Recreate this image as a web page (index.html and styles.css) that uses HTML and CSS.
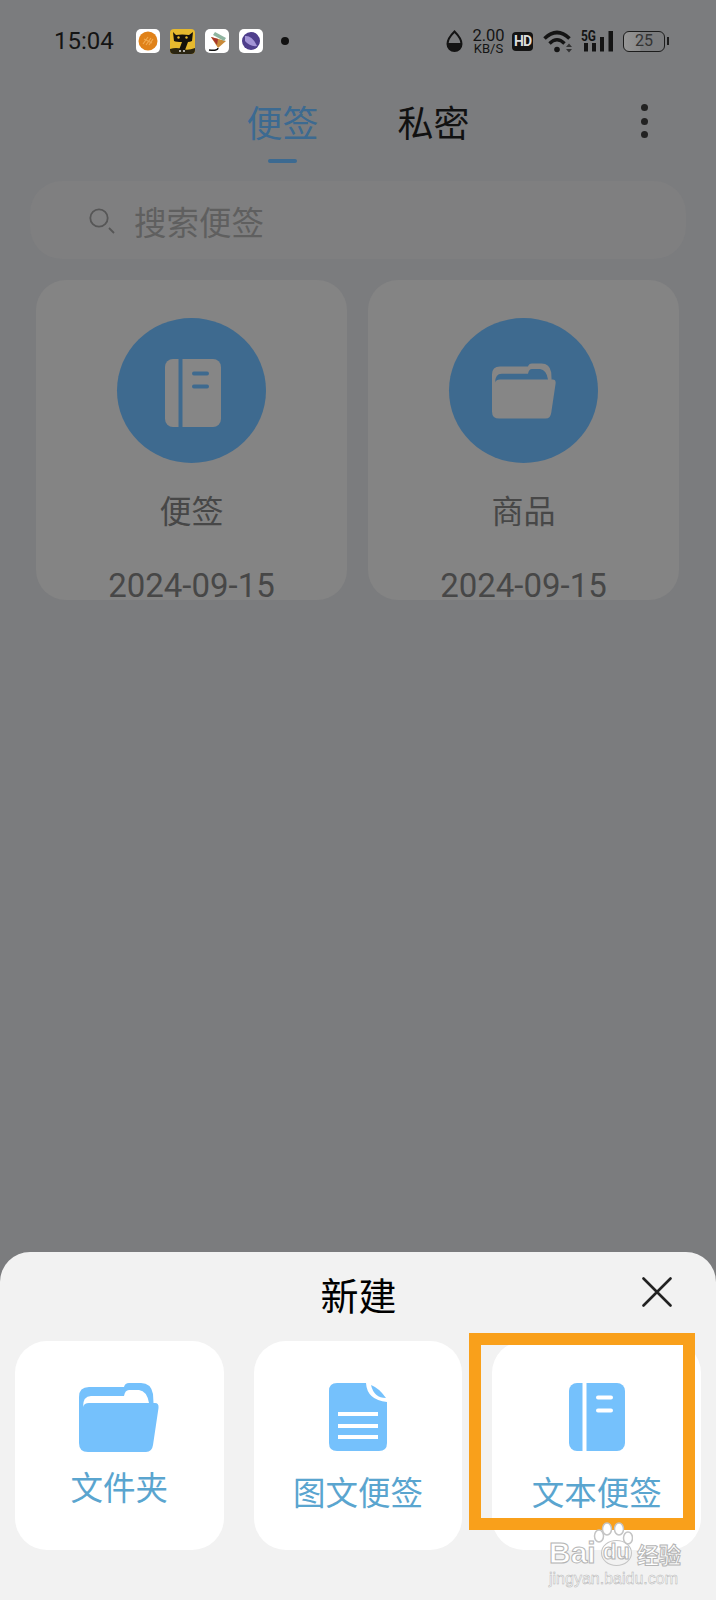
FILE: index.html
```html
<!DOCTYPE html>
<html lang="zh-CN">
<head>
  <meta charset="UTF-8" />
  <meta name="viewport" content="width=device-width, initial-scale=1" />
  <title>便签</title>
  <link rel="stylesheet" href="styles.css">
</head>
<body>
  <svg class="defs" width="0" height="0">
    <symbol id="folder" viewBox="0 0 80 69">
      <path class="ink" d="M10 4H45Q46 0 50 0H62Q72 0 74 11L74.5 20H76Q80 20 79.5 25L74 62Q73 69 67 69H9Q0 69 0 60V14Q0 4 10 4Z"/>
      <path class="cut" d="M4 24Q4 13 12 13H45Q46 7 50 7H60Q68 8 70 20H10Q5 20 4 24Z"/>
    </symbol>
    <symbol id="book" viewBox="0 0 56 68">
      <rect class="ink" width="56" height="68" rx="8"/>
      <rect class="cut" x="13.5" width="4" height="68"/>
      <rect class="cut" x="27" y="12.500" width="17" height="4" rx="2"/>
      <rect class="cut" x="27" y="25.500" width="17" height="4" rx="2"/>
    </symbol>
    <symbol id="doc" viewBox="0 0 58 68">
      <path class="ink" d="M8 0H37Q38 17 58 19V60Q58 68 50 68H8Q0 68 0 60V8Q0 0 8 0Z"/>
      <path class="ink" d="M42 2Q50 5 57 15Q45 15 42 2Z"/>
      <rect class="cut" x="9" y="29" width="40" height="4"/>
      <rect class="cut" x="9" y="41" width="40" height="4"/>
      <rect class="cut" x="9" y="52" width="40" height="4"/>
    </symbol>
  </svg>

  <div class="status-bar">
    <span class="time">15:04</span>
    <div class="app-icons">
      <svg width="24" height="24" viewBox="0 0 24 24">
        <rect width="24" height="24" rx="5" fill="#fff"/>
        <circle cx="12" cy="12" r="9.500" fill="#e0821a"/>
        <path d="M7 15l5-7M10 16l5-7M13 16l4-6M8 10l8 4" stroke="#f2aa50" stroke-width="1.200"/>
      </svg>
      <svg width="25" height="25" viewBox="0 0 25 25">
        <rect width="25" height="25" rx="4" fill="#e6b92e"/>
        <path d="M0 20Q6 18 12 20T25 19V21Q25 25 21 25H4Q0 25 0 21Z" fill="#2a2410"/>
        <path d="M3 3L6 6Q12 5 19 6L23 3L22 12Q20 13 18 13L15 21H9L12 13Q6 13 4 12Z" fill="#14110c"/>
        <circle cx="8.500" cy="8.500" r="1.200" fill="#e6b92e"/>
        <circle cx="16.500" cy="8.500" r="1.200" fill="#e6b92e"/>
        <path d="M9 22h2M13 22h2" stroke="#ddd" stroke-width="1.500"/>
      </svg>
      <svg width="24" height="24" viewBox="0 0 24 24">
        <rect width="24" height="24" rx="5" fill="#fff"/>
        <path d="M6 8L21 12L13 19Z" fill="#c88a3a"/>
        <path d="M6 8L13 10L12 16Z" fill="#a8352c"/>
        <path d="M10 3L21 9L19 12L8 6Z" fill="#8fb4a0"/>
        <path d="M13 19Q13 22 4 21" fill="none" stroke="#111" stroke-width="1.500"/>
      </svg>
      <svg width="24" height="24" viewBox="0 0 24 24">
        <rect width="24" height="24" rx="5" fill="#fff"/>
        <circle cx="12" cy="12" r="9" fill="#4f3f8c"/>
        <path d="M6 7Q13 6 18 17Q11 18 6 12Z" fill="#a394d6"/>
      </svg>
    </div>
    <span class="notice-dot"></span>
    <div class="status-right">
      <svg class="drop" width="17" height="22" viewBox="0 0 17 22">
        <path d="M8.500 1.500Q15.500 8.500 15.500 14A7 7 0 0 1 1.500 14Q1.500 8.500 8.500 1.500Z" fill="none" stroke="#141414" stroke-width="2"/>
        <path d="M1.500 13H15.500V14A7 7 0 0 1 1.500 14Z" fill="#141414"/>
      </svg>
      <div class="speed"><span class="speed-num">2.00</span><span class="speed-unit">KB/S</span></div>
      <span class="hd">HD</span>
      <svg class="wifi" width="31" height="23" viewBox="0 0 31 23">
        <path d="M1.500 8.500Q14 -3.500 26.500 8.500" fill="none" stroke="#141414" stroke-width="3.600"/>
        <path d="M6.500 13.500Q14 6 21.500 13.500" fill="none" stroke="#141414" stroke-width="3.400"/>
        <circle cx="14" cy="19.500" r="2.800" fill="#141414"/>
        <path d="M23 17L26 13.500L29 17ZM23 19L26 22.500L29 19Z" fill="#333"/>
      </svg>
      <svg class="signal" width="32" height="22" viewBox="0 0 32 22">
        <text x="0" y="11" font-family="Roboto" font-weight="700" font-size="15" textLength="15" lengthAdjust="spacingAndGlyphs" fill="#141414">5G</text>
        <rect x="3" y="13" width="4" height="8.500" fill="#141414"/>
        <rect x="11" y="13" width="4" height="8.500" fill="#141414"/>
        <rect x="19" y="7" width="4" height="14.500" fill="#141414"/>
        <rect x="27.500" y="1" width="4.500" height="20.500" fill="#141414"/>
      </svg>
      <div class="battery"><span>25</span></div>
    </div>
  </div>

  <div class="tabs">
    <div class="tab-list">
      <div class="tab active">便签<span class="tab-line"></span></div>
      <div class="tab">私密<span class="tab-line hidden"></span></div>
    </div>
    <div class="more"><i></i><i></i><i></i></div>
  </div>

  <div class="search">
    <svg width="26" height="27" viewBox="0 0 26 27">
      <circle cx="10" cy="11" r="8.700" fill="none" stroke="#565656" stroke-width="1.800"/>
      <path d="M20 21L25 26" stroke="#565656" stroke-width="1.800"/>
    </svg>
    <span>搜索便签</span>
  </div>

  <div class="note-grid">
    <div class="note-card">
      <div class="note-circle"><svg class="book-icon"><use href="#book"/></svg></div>
      <div class="note-name">便签</div>
      <div class="note-date">2024-09-15</div>
    </div>
    <div class="note-card">
      <div class="note-circle"><svg class="folder-icon"><use href="#folder"/></svg></div>
      <div class="note-name">商品</div>
      <div class="note-date">2024-09-15</div>
    </div>
  </div>

  <div class="sheet">
    <div class="sheet-head">
      <span></span>
      <div class="sheet-title">新建</div>
      <svg class="close" width="30" height="30" viewBox="0 0 30 30">
        <path d="M1.500 1.500L28.500 28.500M28.500 1.500L1.500 28.500" stroke="#222" stroke-width="2.600" stroke-linecap="round"/>
      </svg>
    </div>
    <div class="new-grid">
      <div class="new-card first">
        <svg class="new-folder"><use href="#folder"/></svg>
        <div class="new-label">文件夹</div>
      </div>
      <div class="new-card">
        <svg class="new-doc"><use href="#doc"/></svg>
        <div class="new-label">图文便签</div>
      </div>
      <div class="new-card">
        <svg class="new-book"><use href="#book"/></svg>
        <div class="new-label">文本便签</div>
      </div>
    </div>
    <div class="highlight"></div>
    <div class="watermark">
      <div class="wm-logo"><span class="wm-bai">Bai</span><span class="wm-du">du</span><span class="wm-jy">经验</span></div>
      <svg class="paw" width="40" height="26" viewBox="0 0 40 26">
        <g fill="#fff" stroke="#c4c4c4" stroke-width="1.500">
          <ellipse cx="6" cy="14" rx="4.500" ry="6"/>
          <ellipse cx="14" cy="7" rx="4.500" ry="6"/>
          <ellipse cx="26" cy="7" rx="4.500" ry="6"/>
          <ellipse cx="35" cy="16" rx="4.500" ry="6"/>
        </g>
      </svg>
      <div class="wm-url">jingyan.baidu.com</div>
    </div>
  </div>
</body>
</html>
```

FILE: styles.css
```css
* {
  box-sizing: border-box;
}

body {
  font-family: "Roboto", "Noto Sans CJK SC", sans-serif;
  margin: 0;
  width: 716px;
  height: 1600px;
  overflow: hidden;
  display: flex;
  flex-direction: column;
  background-color: #7b7c7e;
  color: #111;
}

.defs {
  position: absolute;
}

.ink {
  fill: var(--ink);
}

.cut {
  fill: var(--cut);
}

/* status bar */
.status-bar {
  height: 82px;
  padding: 0 51px 0 54px;
  display: flex;
  align-items: center;
  color: #141414;
}

.time {
  font-size: 24px;
  width: 58px;
  white-space: nowrap;
}

.app-icons {
  margin-left: 24px;
  display: flex;
  align-items: center;
  gap: 10px;
}

.notice-dot {
  width: 8px;
  height: 8px;
  border-radius: 50%;
  background-color: #111;
  margin-left: 18px;
}

.status-right {
  margin-left: auto;
  display: flex;
  align-items: center;
}

.speed {
  margin-left: 9px;
  width: 33px;
  display: flex;
  flex-direction: column;
  align-items: center;
}

.speed-num {
  font-size: 16.500px;
  line-height: 14px;
}

.speed-unit {
  font-size: 13px;
  line-height: 10px;
  margin-top: 1px;
}

.hd {
  margin-left: 7px;
  width: 21px;
  height: 19px;
  border-radius: 4px;
  background-color: #141414;
  color: #ddd;
  font-size: 14px;
  font-weight: 700;
  line-height: 19px;
  text-align: center;
  letter-spacing: -1px;
}

.wifi {
  margin-left: 10px;
}

.signal {
  margin-left: 7px;
  overflow: visible;
}

.battery {
  position: relative;
  margin-left: 10px;
  width: 42px;
  height: 21px;
  border: 1.500px solid #1c1c1c;
  border-radius: 6px;
  background: linear-gradient(to right, #969696, #8a8a8a 40%, #7b7c7e 42%);
  font-size: 16px;
  line-height: 18px;
  text-align: center;
  color: #333;
}

.battery::after {
  content: "";
  position: absolute;
  right: -5px;
  top: 5px;
  width: 2px;
  height: 8px;
  background-color: #1c1c1c;
}

/* tabs */
.tabs {
  padding-top: 21px;
  position: relative;
}

.tab-list {
  display: flex;
  justify-content: center;
  gap: 79px;
}

.tab {
  font-family: "Noto Sans CJK SC", sans-serif;
  font-size: 36px;
  line-height: 36px;
  display: flex;
  flex-direction: column;
  align-items: center;
}

.tab.active {
  color: #3c6a91;
}

.tab-line {
  margin-top: 20px;
  width: 29px;
  height: 4px;
  border-radius: 2px;
  background-color: #3c6a91;
}

.tab-line.hidden {
  visibility: hidden;
}

.more {
  position: absolute;
  right: 68px;
  top: 22px;
  display: flex;
  flex-direction: column;
  gap: 6.500px;
}

.more i {
  display: block;
  width: 7px;
  height: 7px;
  border-radius: 50%;
  background-color: #222;
}

/* search */
.search {
  margin: 18px 30px 0;
  height: 78px;
  border-radius: 32px;
  background-color: #7f7f80;
  padding-left: 59px;
  display: flex;
  align-items: center;
  gap: 19px;
  font-family: "Noto Sans CJK SC", sans-serif;
  font-size: 32.500px;
  color: #5f5f5f;
}

/* note cards */
.note-grid {
  margin-top: 21px;
  padding-left: 36px;
  display: flex;
  gap: 21px;
}

.note-card {
  width: 311px;
  height: 320px;
  border-radius: 30px;
  background-color: #848484;
  padding-top: 38px;
  display: flex;
  flex-direction: column;
  align-items: center;
  --ink: #868686;
  --cut: #3e6a8f;
}

.note-circle {
  flex-shrink: 0;
  width: 149px;
  height: 145px;
  border-radius: 50%;
  background-color: #3e6a8f;
  display: flex;
  align-items: center;
  justify-content: center;
}

.book-icon {
  width: 56px;
  height: 68px;
  margin: 4px 0 0 3px;
}

.folder-icon {
  width: 64px;
  height: 56px;
  margin: 1px 0 0 1px;
}

.note-name {
  margin-top: 30px;
  font-family: "Noto Sans CJK SC", sans-serif;
  font-size: 32px;
  line-height: 33px;
  color: #474747;
}

.note-date {
  margin-top: 43px;
  font-size: 33px;
  line-height: 33px;
  color: #474747;
  white-space: nowrap;
}

/* bottom sheet */
.sheet {
  position: relative;
  margin-top: auto;
  height: 348px;
  border-radius: 30px 30px 0 0;
  background-color: #f2f2f2;
  padding-top: 22px;
}

.sheet-head {
  padding: 0 44px 0 45px;
  height: 39px;
  display: grid;
  grid-template-columns: 1fr auto 1fr;
  align-items: center;
}

.sheet-title {
  font-family: "Noto Sans CJK SC", sans-serif;
  font-size: 38px;
  line-height: 39px;
  color: #000;
}

.close {
  justify-self: end;
  margin-top: -3px;
}

.new-grid {
  margin-top: 28px;
  padding: 0 15px;
  display: grid;
  grid-template-columns: repeat(3, 1fr);
  gap: 30px;
}

.new-card {
  height: 209px;
  border-radius: 32px;
  background-color: #fff;
  padding-top: 42px;
  display: flex;
  flex-direction: column;
  align-items: center;
  --ink: #75c1fc;
  --cut: #fff;
}

.new-folder {
  width: 80px;
  height: 69px;
}

.new-doc {
  width: 58px;
  height: 68px;
}

.new-book {
  width: 56px;
  height: 68px;
}

.new-label {
  margin-top: 24px;
  font-family: "Noto Sans CJK SC", sans-serif;
  font-size: 32.500px;
  line-height: 32px;
  color: #5aa5cf;
  white-space: nowrap;
}

.first .new-label {
  margin-top: 18px;
}

/* tutorial marker + watermark, both sit on top of the sheet */
.highlight {
  position: absolute;
  left: 469px;
  top: 81px;
  width: 226px;
  height: 197px;
  border: 12.500px solid #f9a01b;
}

.watermark {
  position: absolute;
  left: 549px;
  top: 270px;
  width: 132px;
  padding-top: 18px;
  color: #fff;
  white-space: nowrap;
}

.paw {
  position: absolute;
  left: 44px;
  top: 0;
}

.wm-logo {
  display: flex;
  align-items: center;
  height: 26px;
  font-family: "Liberation Sans", sans-serif;
  font-weight: 700;
  -webkit-text-stroke: 1px #b4b4b4;
}

.wm-bai {
  font-size: 30px;
  line-height: 26px;
}

.wm-du {
  margin-left: 5px;
  width: 36px;
  height: 26px;
  border-radius: 50%;
  border: 1.500px solid #c4c4c4;
  font-size: 22px;
  line-height: 22px;
  text-align: center;
}

.wm-jy {
  margin-left: 5px;
  font-family: "Noto Sans CJK SC", sans-serif;
  font-size: 22px;
  line-height: 26px;
}

.wm-url {
  margin-top: 3px;
  font-family: "Liberation Sans", sans-serif;
  font-size: 16px;
  line-height: 20px;
  -webkit-text-stroke: 0.5px #b4b4b4;
}
```
